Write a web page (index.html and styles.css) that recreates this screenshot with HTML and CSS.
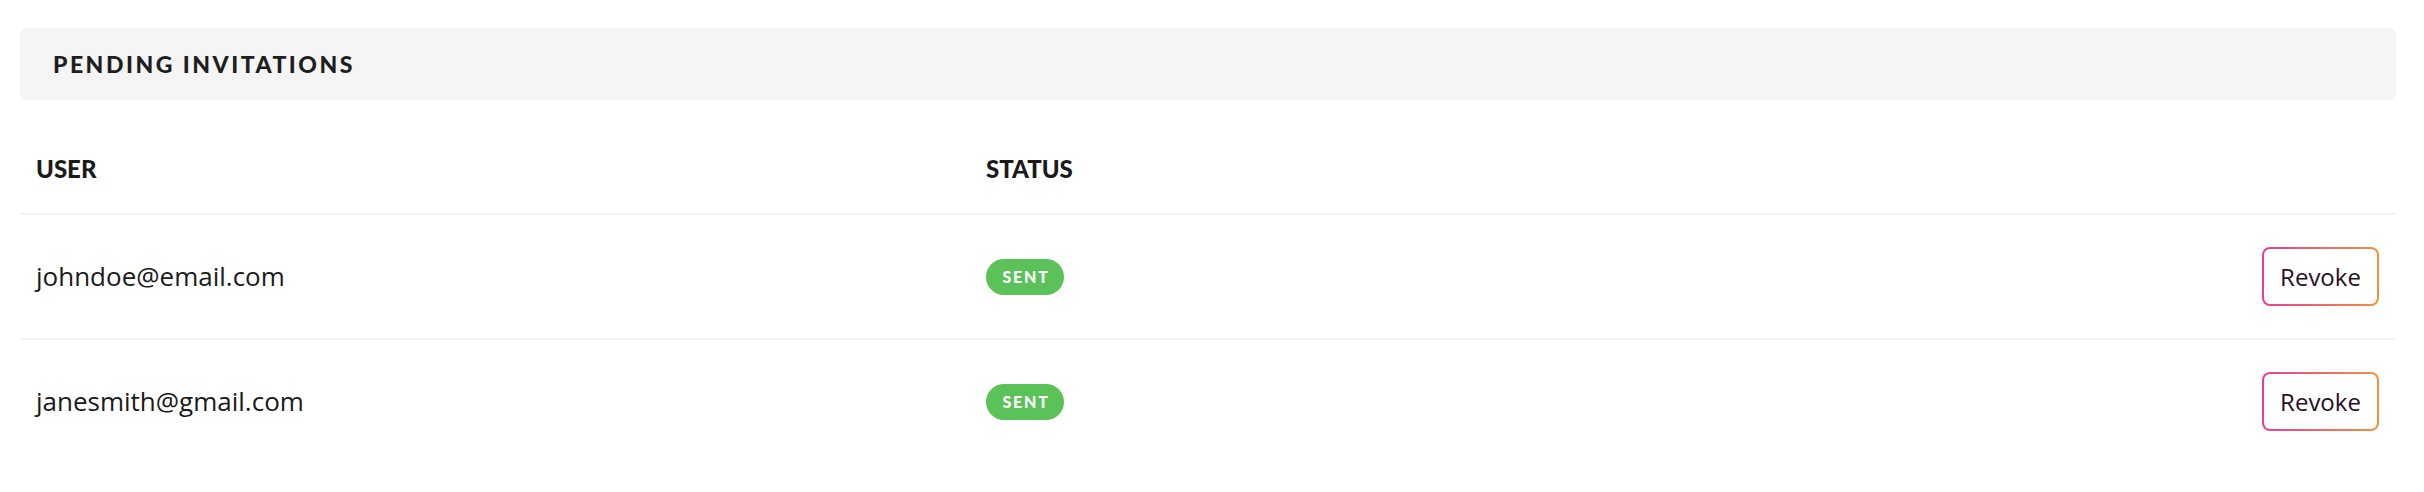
FILE: index.html
```html
<!DOCTYPE html>
<html lang="en">
<head>
<meta charset="utf-8">
<title>Pending invitations</title>
<link rel="stylesheet" href="styles.css">
</head>
<body>
<section class="panel">
  <header class="panel-head">
    <h2 class="panel-title">Pending Invitations</h2>
  </header>
  <div class="table">
    <div class="row row-head">
      <div class="cell th">User</div>
      <div class="cell th">Status</div>
      <div class="cell"></div>
    </div>
    <div class="row">
      <div class="cell email">johndoe@email.com</div>
      <div class="cell"><span class="badge">Sent</span></div>
      <div class="cell actions"><button class="btn-revoke"><span>Revoke</span></button></div>
    </div>
    <div class="row">
      <div class="cell email">janesmith@gmail.com</div>
      <div class="cell"><span class="badge">Sent</span></div>
      <div class="cell actions"><button class="btn-revoke"><span>Revoke</span></button></div>
    </div>
  </div>
</section>
</body>
</html>
```
FILE: styles.css
```css
* { box-sizing: border-box; }
html, body { background: #ffffff; }
body {
  margin: 0;
  padding: 28px 28px 0 20px;
  font-family: "Open Sans", "Liberation Sans", sans-serif;
  color: #1c1c1c;
}
.panel-head {
  height: 72px;
  background: #f5f5f5;
  border-radius: 8px;
  display: flex;
  align-items: center;
  padding-left: 33px;
}
.panel-title {
  margin: 0;
  font-family: Lato, "Liberation Sans", sans-serif;
  font-weight: 900;
  font-size: 23px;
  letter-spacing: 2.5px;
  text-transform: uppercase;
  color: #1e1e1e;
}
.table {
  margin-top: 24px;
}
.row {
  display: grid;
  grid-template-columns: 950px 1fr auto;
  align-items: center;
  height: 125px;
  border-top: 2px solid #f4f4f4;
}
.row.row-head {
  height: 89px;
  border-top: none;
}
.cell {
  padding: 0 17px 0 16px;
}
.th {
  font-family: Lato, "Liberation Sans", sans-serif;
  font-weight: 900;
  font-size: 24px;
  text-transform: uppercase;
  color: #1a1a1a;
}
.email {
  font-size: 26px;
  color: #1a1a1a;
  padding-bottom: 2px;
}
.badge {
  display: inline-flex;
  align-items: center;
  justify-content: center;
  width: 78px;
  height: 36px;
  border-radius: 18px;
  background: #5bc25a;
  color: #ffffff;
  font-family: Lato, "Liberation Sans", sans-serif;
  font-weight: 900;
  font-size: 16px;
  letter-spacing: 1.8px;
  padding-left: 2px;
  text-transform: uppercase;
}
.actions {
  display: flex;
  justify-content: flex-end;
}
.btn-revoke {
  width: 117px;
  height: 59px;
  padding: 2px;
  border: none;
  border-radius: 8px;
  background: linear-gradient(90deg, #e83e97, #f0923c);
  cursor: pointer;
}
.btn-revoke span {
  display: flex;
  align-items: center;
  justify-content: center;
  width: 100%;
  height: 100%;
  border-radius: 6px;
  background: #ffffff;
  font-family: "Open Sans", "Liberation Sans", sans-serif;
  font-size: 24px;
  color: #2a0d27;
}
```
